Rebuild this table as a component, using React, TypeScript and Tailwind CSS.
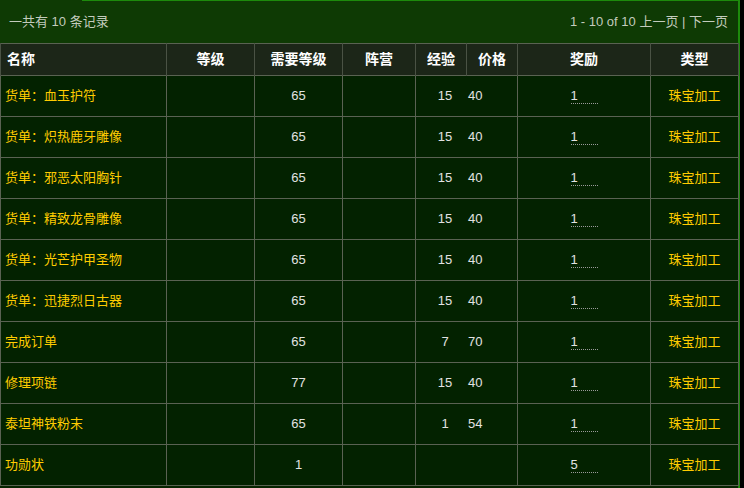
const ROWS = [
  { name: "货单：血玉护符", req: "65", xp: "15", price: "40", reward: "1" },
  { name: "货单：炽热鹿牙雕像", req: "65", xp: "15", price: "40", reward: "1" },
  { name: "货单：邪恶太阳胸针", req: "65", xp: "15", price: "40", reward: "1" },
  { name: "货单：精致龙骨雕像", req: "65", xp: "15", price: "40", reward: "1" },
  { name: "货单：光芒护甲圣物", req: "65", xp: "15", price: "40", reward: "1" },
  { name: "货单：迅捷烈日古器", req: "65", xp: "15", price: "40", reward: "1" },
  { name: "完成订单", req: "65", xp: "7", price: "70", reward: "1" },
  { name: "修理项链", req: "77", xp: "15", price: "40", reward: "1" },
  { name: "泰坦神铁粉末", req: "65", xp: "1", price: "54", reward: "1" },
  { name: "功勋状", req: "1", xp: "", price: "", reward: "5" },
];

const FONT = "font-['Liberation_Sans','Noto_Sans_CJK_SC',sans-serif]";

function Th({ children, left, w }: { children?: React.ReactNode; left?: boolean; w: string }) {
  return (
    <th className={`${w} h-[32px] border-x border-[#4a5244] p-0 text-[14px] font-bold text-white ${left ? "pl-[6px] text-left" : "text-center"}`}>
      {children}
    </th>
  );
}

export default function App() {
  return (
    <div className={`h-[488px] w-[744px] overflow-hidden bg-black ${FONT}`}>
      <div className="h-[488px] w-[740px] border-r-2 border-[#1d8a0c] bg-[#062400]">
        {/* pager bar */}
        <div className="relative flex h-[43px] items-center justify-between bg-[#0e3a04] pl-[9px] pr-[10px] text-[13px] text-[#c3cbbd]">
          <span className="absolute left-[82px] right-0 top-0 h-px bg-[#1d8a0c]" />
          <span>一共有 10 条记录</span>
          <span>1 - 10 of 10 上一页 | 下一页</span>
        </div>

        <table className="w-[738px] table-fixed border-collapse">
          <thead>
            <tr className="border-y border-[#5a6252] bg-[#1c2618]">
              <Th left w="w-[166px]">名称</Th>
              <Th w="w-[88px]">等级</Th>
              <Th w="w-[88px]">需要等级</Th>
              <Th w="w-[73px]">阵营</Th>
              <Th w="w-[51px]">经验</Th>
              <Th w="w-[51px]">价格</Th>
              <Th w="w-[133px]">奖励</Th>
              <Th w="w-[88px]">类型</Th>
            </tr>
          </thead>
          <tbody>
            {ROWS.map((r) => (
              <tr key={r.name} className="h-[41px] border-b border-[#5a6252] bg-[#032200] text-[13px]">
                <td className="border-x border-[#5a6252] pl-[4px] text-[#ffcc00]">{r.name}</td>
                <td className="border-x border-[#5a6252]" />
                <td className="border-x border-[#5a6252] text-center text-[#e2e2e2]">{r.req}</td>
                <td className="border-x border-[#5a6252]" />
                <td colSpan={2} className="border-x border-[#5a6252] text-[#e2e2e2]">
                  <div className="flex">
                    <span className="w-[52px] pl-[6px] text-center">{r.xp}</span>
                    <span>{r.price}</span>
                  </div>
                </td>
                <td className="border-x border-[#5a6252] text-center">
                  <span className="inline-block w-[27px] border-b border-dotted border-[#9a9a9a] text-left leading-[14px] text-[#e2e2e2]">
                    {r.reward}
                  </span>
                </td>
                <td className="border-x border-[#5a6252] text-center text-[#ffcc00]">珠宝加工</td>
              </tr>
            ))}
          </tbody>
        </table>
      </div>
    </div>
  );
}
